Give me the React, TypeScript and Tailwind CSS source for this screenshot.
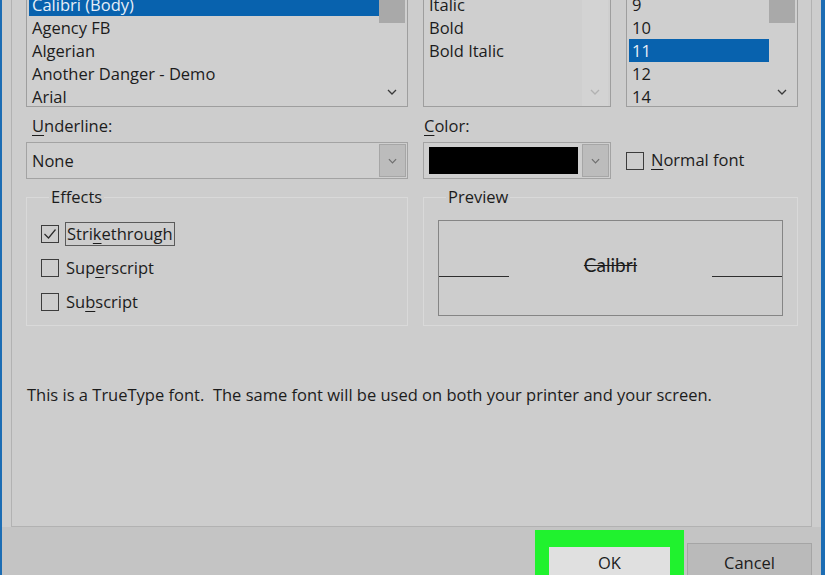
import React from "react";

const FONT = "font-['Open_Sans',_'Noto_Sans',_sans-serif]";

function Chevron({ color = "#333", w = 10 }: { color?: string; w?: number }) {
  return (
    <svg width={w} height={6} viewBox="0 0 10 6" fill="none">
      <path d="M1 1 L5 5 L9 1" stroke={color} strokeWidth={1.3} />
    </svg>
  );
}

function ListBox({
  items,
  selected,
  scroll,
  width,
}: {
  items: string[];
  selected: number;
  scroll: "thumb" | "disabled";
  width: string;
}) {
  return (
    <div className={`${width} h-[107px] border border-t-0 border-[#9e9e9e] bg-[#cfcfcf] flex overflow-hidden`}>
      <div className="flex-1 pl-[2px] overflow-hidden">
        <div className="-mt-[7px] flex flex-col">
          {items.map((it, i) => (
            <div
              key={it}
              className={`h-[23px] leading-[23px] pl-[3px] text-[16.5px] whitespace-nowrap ${
                i === selected ? "bg-[#0862ae] text-[#e6eef7]" : "text-[#1c1c1c]"
              }`}
            >
              {it}
            </div>
          ))}
        </div>
      </div>
      <div
        className={`w-[26px] mr-[2px] flex flex-col justify-between ${
          scroll === "disabled" ? "bg-[#d3d3d3]" : "bg-[#cfcfcf]"
        }`}
      >
        <div className={`h-[23px] ${scroll === "thumb" ? "bg-[#a9a9a9]" : ""}`} />
        <div className="h-[24px] flex items-center justify-center pb-[4px]">
          <Chevron color={scroll === "disabled" ? "#b2b2b2" : "#3a3a3a"} />
        </div>
      </div>
    </div>
  );
}

function CheckBox({ checked = false }: { checked?: boolean }) {
  return (
    <div className="w-[18px] h-[18px] border border-[#3c3c3c] flex items-center justify-center shrink-0">
      {checked && (
        <svg width="14" height="12" viewBox="0 0 14 12" fill="none">
          <path d="M1.5 6 L5.5 10 L12.5 1.5" stroke="#2a2a2a" strokeWidth={1.2} />
        </svg>
      )}
    </div>
  );
}

function DropButton() {
  return (
    <div className="w-[27px] my-[1px] mr-[1px] bg-[#bcbcbc] border border-[#a6a6a6] flex items-center justify-center">
      <Chevron color="#6e6e6e" w={9} />
    </div>
  );
}

export default function App() {
  return (
    <div
      className={`${FONT} w-[825px] h-[575px] overflow-hidden flex flex-col bg-[#c4c4c4] border-l-2 border-r-[4px] border-[#1c6db4] text-[#1c1c1c]`}
    >
      <div className="h-[527px] shrink-0 bg-[#cdcdcd] pl-[9px] pr-[9px] flex">
        <div className="flex-1 border-x border-b border-[#b2b2b2] bg-[#cdcdcd] pl-[14px]">
          <div className="grid grid-cols-[382px_188px_172px] gap-x-[15px]">
            {/* Row 1: lists */}
            <ListBox
              width="w-[382px]"
              items={["Calibri (Body)", "Agency FB", "Algerian", "Another Danger - Demo", "Arial"]}
              selected={0}
              scroll="thumb"
            />
            <ListBox
              width="w-[188px]"
              items={["Italic", "Bold", "Bold Italic"]}
              selected={-1}
              scroll="disabled"
            />
            <ListBox
              width="w-[172px]"
              items={["9", "10", "11", "12", "14"]}
              selected={2}
              scroll="thumb"
            />

            {/* Row 2: labels */}
            <div className="mt-[7px] h-[24px] leading-[24px] pl-[6px] text-[16.5px]">
              <span className="underline underline-offset-[3px] decoration-1">U</span>nderline:
            </div>
            <div className="mt-[7px] h-[24px] leading-[24px] pl-[1px] text-[16.5px]">
              <span className="underline underline-offset-[3px] decoration-1">C</span>olor:
            </div>
            <div />

            {/* Row 3: combos */}
            <div className="mt-[4px] h-[37px] border border-[#a3a3a3] bg-[#cfcfcf] flex">
              <div className="flex-1 pl-[5px] leading-[35px] text-[16.5px]">None</div>
              <DropButton />
            </div>
            <div className="mt-[4px] h-[37px] border border-[#a3a3a3] bg-[#cfcfcf] flex">
              <div className="flex-1 pl-[5px] pr-[4px] py-[4px]">
                <div className="h-full bg-black" />
              </div>
              <DropButton />
            </div>
            <div className="mt-[4px] h-[37px] flex items-center gap-[7px]">
              <CheckBox />
              <span className="text-[16.5px]">
                <span className="underline underline-offset-[3px] decoration-1">N</span>ormal font
              </span>
            </div>

            {/* Row 4: groups */}
            <fieldset className="mt-[6px] h-[141px] border border-[#d9d9d9] pl-[14px]">
              <legend className="ml-[8px] px-[2px] h-[24px] leading-[24px] text-[16.5px]">Effects</legend>
              <div className="pt-[8px] flex flex-col">
                <div className="h-[34px] flex items-center gap-[6px]">
                  <CheckBox checked />
                  <span className="border border-[#5a5a5a] h-[24px] leading-[22px] px-[1px] text-[16.5px]">
                    Stri<span className="underline underline-offset-[3px] decoration-1">k</span>ethrough
                  </span>
                </div>
                <div className="h-[34px] flex items-center gap-[7px]">
                  <CheckBox />
                  <span className="text-[16.5px]">
                    Sup<span className="underline underline-offset-[3px] decoration-1">e</span>rscript
                  </span>
                </div>
                <div className="h-[34px] flex items-center gap-[7px]">
                  <CheckBox />
                  <span className="text-[16.5px]">
                    Su<span className="underline underline-offset-[3px] decoration-1">b</span>script
                  </span>
                </div>
              </div>
            </fieldset>
            <fieldset className="col-span-2 mt-[6px] h-[141px] border border-[#d9d9d9] px-[14px]">
              <legend className="ml-[8px] px-[2px] h-[24px] leading-[24px] text-[16.5px]">Preview</legend>
              <div className="mt-[11px] h-[96px] border border-[#858585]">
                <div className="mt-[35px] h-[21px] flex items-end">
                  <div className="w-[70px] h-[1px] bg-[#2e2e2e]" />
                  <div className="flex-1 text-center leading-[24px] text-[19px] font-['Lato',_sans-serif] line-through decoration-1">
                    Calibri
                  </div>
                  <div className="w-[70px] h-[1px] bg-[#2e2e2e]" />
                </div>
              </div>
            </fieldset>

            {/* Row 5: info text */}
            <div className="col-span-3 mt-[57px] h-[24px] leading-[24px] pl-[1px] whitespace-nowrap text-[16.5px]">
              This is a TrueType font.&nbsp; The same font will be used on both your printer and your screen.
            </div>
          </div>
        </div>
      </div>

      {/* Footer */}
      <div className="flex-1 flex justify-end pr-[9px] items-start">
        <div className="mt-[3px] w-[149px] h-[60px] bg-[#20f22e] pl-[14px] pr-[14px] pt-[17px]">
          <div className="h-[40px] bg-[#e0e0e0] flex justify-center pt-[4px] text-[16.5px] leading-[24px]">OK</div>
        </div>
        <div className="mt-[16px] ml-[3px] w-[125px] h-[40px] bg-[#bababa] border border-[#a5a5a5] flex justify-center pt-[7px] text-[16.5px] leading-[24px]">
          Cancel
        </div>
      </div>
    </div>
  );
}
